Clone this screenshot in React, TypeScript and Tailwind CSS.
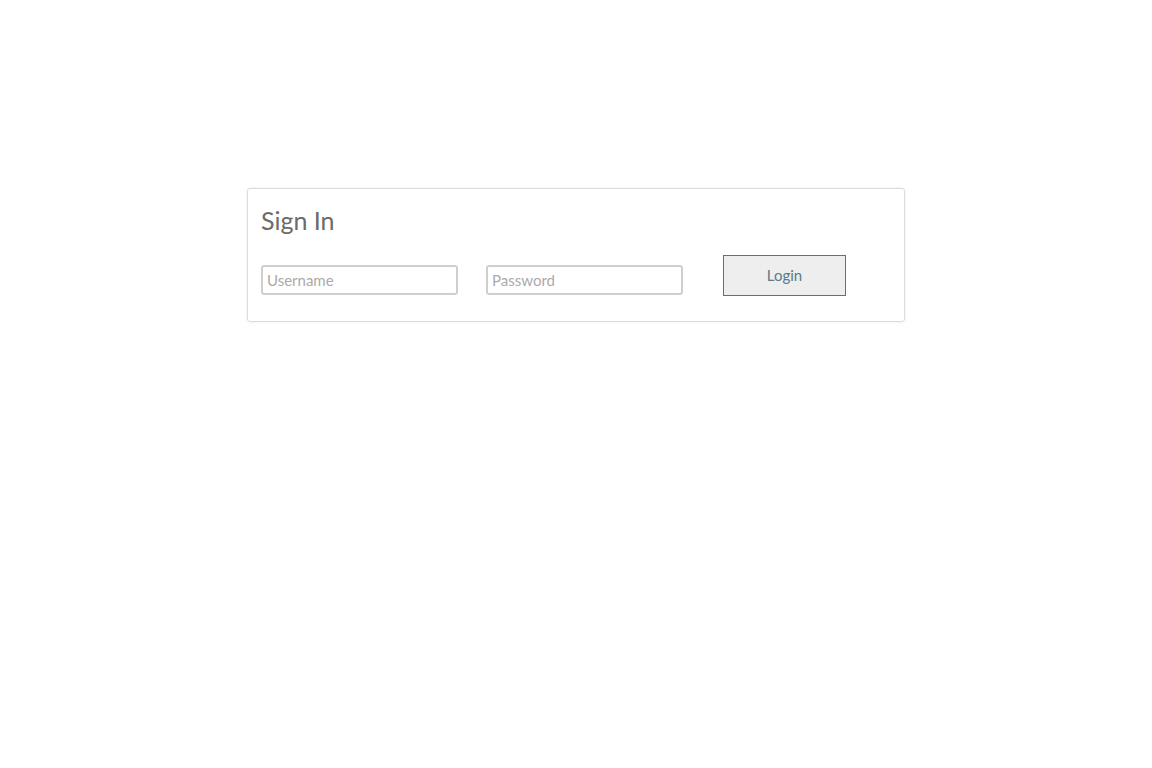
export default function App() {
  return (
    <div className="min-h-screen bg-white pt-[188px]" style={{ fontFamily: "Lato, 'Noto Sans', sans-serif" }}>
      {/* Sign in card */}
      <div className="mx-auto w-[658px] rounded-[3px] border border-[#dcdcdc] px-[13px] pt-[16px] pb-[26px] shadow-[0_0_3px_rgba(0,0,0,0.08)]">
        <h1 className="text-[25px] leading-[30px] text-[#6b6b6b]">Sign In</h1>
        <div className="mt-[20px] flex items-end">
          <input
            type="text"
            placeholder="Username"
            className="h-[30px] w-[197px] rounded-[3px] border-2 border-[#cfcfcf] px-[4px] text-[15px] text-[#555] placeholder:text-[#aaa] focus:outline-none"
          />
          <input
            type="password"
            placeholder="Password"
            className="ml-[28px] h-[30px] w-[197px] rounded-[3px] border-2 border-[#cfcfcf] px-[4px] text-[15px] text-[#555] placeholder:text-[#aaa] focus:outline-none"
          />
          <button className="mb-[-1px] ml-[40px] h-[41px] w-[123px] border border-[#4f7784] bg-[#eeeeee] text-[15px] text-[#5a7a86]">
            Login
          </button>
        </div>
      </div>
    </div>
  );
}
